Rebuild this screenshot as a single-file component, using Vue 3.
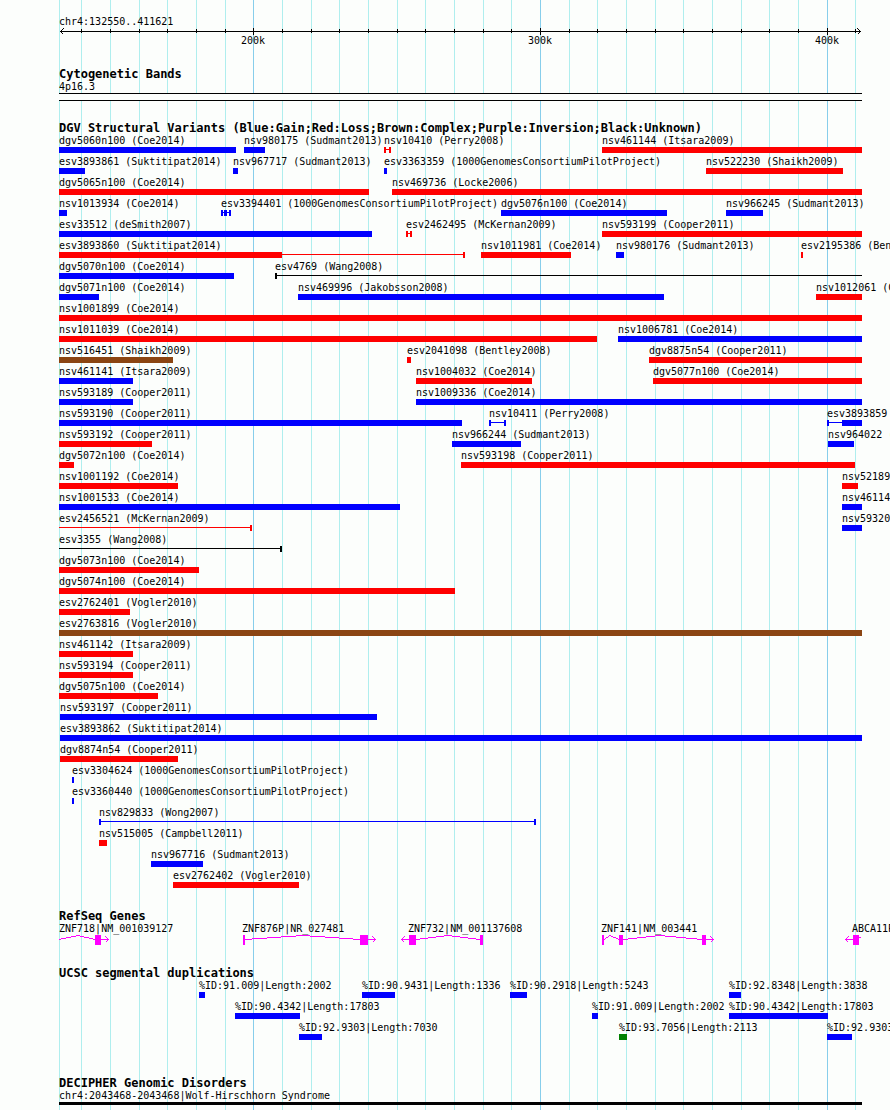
<template>
  <main class="browser">
    <div class="grid-lines" aria-hidden="true">
      <svg :viewBox="`0 0 ${span} 10`" preserveAspectRatio="none">
        <rect
          v-for="x in gridLines"
          :key="x"
          :class="majors[x] ? 'major' : 'minor'"
          :x="x - view.start"
          y="0"
          width="1"
          height="10"
        />
      </svg>
    </div>

    <section class="ruler">
      <div class="label">chr4:132550..411621</div>
      <svg class="ruler-axis" :viewBox="`0 0 ${span} 7`" preserveAspectRatio="none">
        <rect x="1" y="3" :width="span - 2" height="1" />
        <rect
          v-for="x in gridLines.slice(1)"
          :key="x"
          :x="x - view.start"
          :y="majors[x] ? 0 : 1"
          width="1"
          :height="majors[x] ? 7 : 4"
        />
        <path d="M4.5 0.5L1.5 3.5L4.5 6.5" />
        <path :d="`M${span - 4.5} 0.5L${span - 1.5} 3.5L${span - 4.5} 6.5`" />
      </svg>
      <div class="row">
        <span
          v-for="(text, x) in majors"
          :key="x"
          class="label tick-label"
          :style="place(Number(x), Number(x))"
        >{{ text }}</span>
      </div>
    </section>

    <section class="bands">
      <h2>Cytogenetic Bands</h2>
      <div class="label">4p16.3</div>
      <div class="band"></div>
    </section>

    <section v-for="track in tracks" :key="track.title" class="track" :class="track.kind">
      <h2>{{ track.title }}</h2>
      <div class="rows">
        <div v-for="(row, i) in track.rows" :key="i" class="row">
          <div
            v-for="(f, j) in row"
            :key="j"
            class="feature"
            :style="place(f[2], f[3])"
          >
            <div class="label">{{ f[0] }}</div>
            <svg
              :class="f[1]"
              :viewBox="`0 0 ${f[3] - f[2]} 6`"
              preserveAspectRatio="none"
            >
              <template v-if="f[4]">
                <rect x="0" y="2" :width="f[3] - f[2]" height="1" />
                <rect
                  v-for="block in f[4]"
                  :key="block[0]"
                  :x="block[0] - f[2]"
                  y="0"
                  :width="block[1] - block[0]"
                  height="6"
                />
              </template>
              <rect v-else x="0" y="0" :width="f[3] - f[2]" height="6" />
            </svg>
          </div>
        </div>
      </div>
      <svg
        v-if="track.kind === 'genes'"
        class="gene-models"
        :viewBox="`${view.start} 0 ${span} 10`"
        preserveAspectRatio="none"
      >
        <rect
          v-for="exon in exons"
          :key="exon[0]"
          :x="exon[0]"
          y="0"
          :width="exon[1] - exon[0]"
          height="10"
        />
        <path v-for="d in introns" :key="d" :d="d" />
      </svg>
    </section>

    <section class="decipher">
      <h2>DECIPHER Genomic Disorders</h2>
      <div class="label">chr4:2043468-2043468|Wolf-Hirschhorn Syndrome</div>
      <div class="disorder"></div>
    </section>
  </main>
</template>

<script setup>
// visible range of the panel, in drawing units
const view = { start: 59, end: 862 }
const span = view.end - view.start

const gridLines = [
  59, 81, 110, 139, 167, 196, 225, 253, 282, 311, 339, 368, 397, 425, 454,
  483, 511, 540, 569, 597, 626, 655, 683, 712, 741, 769, 798, 827, 855
]
const majors = { 253: '200k', 540: '300k', 827: '400k' }

// feature: [label, colour, start, end, blocks joined by a thin line]
const variants = [
  [
    ['dgv5060n100 (Coe2014)', 'blue', 59, 236],
    ['nsv980175 (Sudmant2013)', 'blue', 244, 265],
    ['nsv10410 (Perry2008)', 'red', 384, 391, [[384, 386], [389, 391]]],
    ['nsv461144 (Itsara2009)', 'red', 602, 862]
  ],
  [
    ['esv3893861 (Suktitipat2014)', 'blue', 59, 85],
    ['nsv967717 (Sudmant2013)', 'blue', 233, 238],
    ['esv3363359 (1000GenomesConsortiumPilotProject)', 'blue', 384, 387],
    ['nsv522230 (Shaikh2009)', 'red', 706, 843]
  ],
  [
    ['dgv5065n100 (Coe2014)', 'red', 59, 369],
    ['nsv469736 (Locke2006)', 'red', 392, 862]
  ],
  [
    ['nsv1013934 (Coe2014)', 'blue', 59, 67],
    ['esv3394401 (1000GenomesConsortiumPilotProject)', 'blue', 221, 231, [[221, 223], [224, 227], [229, 231]]],
    ['dgv5076n100 (Coe2014)', 'blue', 501, 667],
    ['nsv966245 (Sudmant2013)', 'blue', 726, 763]
  ],
  [
    ['esv33512 (deSmith2007)', 'blue', 59, 372],
    ['esv2462495 (McKernan2009)', 'red', 406, 412, [[406, 408], [410, 412]]],
    ['nsv593199 (Cooper2011)', 'red', 602, 862]
  ],
  [
    ['esv3893860 (Suktitipat2014)', 'red', 59, 465, [[59, 282], [463, 465]]],
    ['nsv1011981 (Coe2014)', 'red', 481, 571],
    ['nsv980176 (Sudmant2013)', 'blue', 616, 624],
    ['esv2195386 (Bentley2008)', 'red', 801, 803]
  ],
  [
    ['dgv5070n100 (Coe2014)', 'blue', 59, 234],
    ['esv4769 (Wang2008)', 'black', 275, 862, [[275, 277]]]
  ],
  [
    ['dgv5071n100 (Coe2014)', 'blue', 59, 99],
    ['nsv469996 (Jakobsson2008)', 'blue', 298, 664],
    ['nsv1012061 (Coe2014)', 'red', 816, 862]
  ],
  [['nsv1001899 (Coe2014)', 'red', 59, 862]],
  [
    ['nsv1011039 (Coe2014)', 'red', 59, 597],
    ['nsv1006781 (Coe2014)', 'blue', 618, 862]
  ],
  [
    ['nsv516451 (Shaikh2009)', 'brown', 59, 173],
    ['esv2041098 (Bentley2008)', 'red', 407, 411],
    ['dgv8875n54 (Cooper2011)', 'red', 649, 862]
  ],
  [
    ['nsv461141 (Itsara2009)', 'blue', 59, 133],
    ['nsv1004032 (Coe2014)', 'red', 416, 532],
    ['dgv5077n100 (Coe2014)', 'red', 653, 862]
  ],
  [
    ['nsv593189 (Cooper2011)', 'blue', 59, 133],
    ['nsv1009336 (Coe2014)', 'blue', 416, 862]
  ],
  [
    ['nsv593190 (Cooper2011)', 'blue', 59, 462],
    ['nsv10411 (Perry2008)', 'blue', 489, 506, [[489, 491], [504, 506]]],
    ['esv3893859 (Suktitipat2014)', 'blue', 827, 862, [[827, 829], [842, 862]]]
  ],
  [
    ['nsv593192 (Cooper2011)', 'red', 59, 152],
    ['nsv966244 (Sudmant2013)', 'blue', 452, 521],
    ['nsv964022 (Sudmant2013)', 'blue', 828, 854]
  ],
  [
    ['dgv5072n100 (Coe2014)', 'red', 59, 74],
    ['nsv593198 (Cooper2011)', 'red', 461, 855]
  ],
  [
    ['nsv1001192 (Coe2014)', 'red', 59, 178],
    ['nsv52189', 'red', 842, 858]
  ],
  [
    ['nsv1001533 (Coe2014)', 'blue', 59, 400],
    ['nsv46114', 'blue', 842, 862]
  ],
  [
    ['esv2456521 (McKernan2009)', 'red', 59, 252, [[250, 252]]],
    ['nsv59320', 'blue', 842, 862]
  ],
  [['esv3355 (Wang2008)', 'black', 59, 282, [[280, 282]]]],
  [['dgv5073n100 (Coe2014)', 'red', 59, 199]],
  [['dgv5074n100 (Coe2014)', 'red', 59, 455]],
  [['esv2762401 (Vogler2010)', 'red', 59, 130]],
  [['esv2763816 (Vogler2010)', 'brown', 59, 862]],
  [['nsv461142 (Itsara2009)', 'red', 59, 133]],
  [['nsv593194 (Cooper2011)', 'red', 59, 133]],
  [['dgv5075n100 (Coe2014)', 'red', 59, 158]],
  [['nsv593197 (Cooper2011)', 'blue', 60, 377]],
  [['esv3893862 (Suktitipat2014)', 'blue', 60, 862]],
  [['dgv8874n54 (Cooper2011)', 'red', 60, 178]],
  [['esv3304624 (1000GenomesConsortiumPilotProject)', 'blue', 72, 74]],
  [['esv3360440 (1000GenomesConsortiumPilotProject)', 'blue', 72, 74]],
  [['nsv829833 (Wong2007)', 'blue', 99, 536, [[99, 101], [534, 536]]]],
  [['nsv515005 (Campbell2011)', 'red', 99, 107]],
  [['nsv967716 (Sudmant2013)', 'blue', 151, 203]],
  [['esv2762402 (Vogler2010)', 'red', 173, 299]]
]

const genes = [
  [
    ['ZNF718|NM_001039127', 'magenta', 59, 109],
    ['ZNF876P|NR_027481', 'magenta', 242, 376],
    ['ZNF732|NM_001137608', 'magenta', 408, 483],
    ['ZNF141|NM_003441', 'magenta', 601, 714],
    ['ABCA11P', 'magenta', 852, 862]
  ]
]

const exons = [
  [95, 101], [243, 245], [360, 368], [409, 416], [480, 483],
  [602, 604], [619, 623], [702, 706], [853, 859]
]
const introns = [
  'M59 4.5L78 0.5L95 4.5M101 4.5H109M105.5 1.5L108.5 4.5L105.5 7.5',
  'M245 4.5L303 0.5L360 4.5M368 4.5H376M372.5 1.5L375.5 4.5L372.5 7.5',
  'M409 4.5H401M404.5 1.5L401.5 4.5L404.5 7.5M416 4.5L448 0.5L480 4.5',
  'M604 4.5L610 0.5L619 4.5M623 4.5L660 0.5L702 4.5M706 4.5H714M710.5 1.5L713.5 4.5L710.5 7.5',
  'M853 4.5H845M848.5 1.5L845.5 4.5L848.5 7.5M859 2.5H861'
]

const duplications = [
  [
    ['%ID:91.009|Length:2002', 'blue', 199, 205],
    ['%ID:90.9431|Length:1336', 'blue', 362, 395],
    ['%ID:90.2918|Length:5243', 'blue', 510, 527],
    ['%ID:92.8348|Length:3838', 'blue', 729, 741]
  ],
  [
    ['%ID:90.4342|Length:17803', 'blue', 235, 300],
    ['%ID:91.009|Length:2002', 'blue', 592, 598],
    ['%ID:90.4342|Length:17803', 'blue', 729, 828]
  ],
  [
    ['%ID:92.9303|Length:7030', 'blue', 299, 322],
    ['%ID:93.7056|Length:2113', 'green', 619, 627],
    ['%ID:92.9303|Length:7030', 'blue', 827, 852]
  ]
]

const tracks = [
  {
    title: 'DGV Structural Variants (Blue:Gain;Red:Loss;Brown:Complex;Purple:Inversion;Black:Unknown)',
    kind: 'variants',
    rows: variants
  },
  { title: 'RefSeq Genes', kind: 'genes', rows: genes },
  { title: 'UCSC segmental duplications', kind: 'duplications', rows: duplications }
]

function place(start, end) {
  return {
    marginLeft: ((start - view.start) / span) * 100 + '%',
    width: ((end - start) / span) * 100 + '%'
  }
}
</script>

<style>
body {
  margin: 0;
  background: #fcfefc;
}
</style>

<style scoped>
.browser {
  position: relative;
  box-sizing: border-box;
  min-height: 100vh;
  padding: 16px 28px 5px 59px;
  overflow: hidden;
  background: #fcfefc;
  color: #000;
  font-family: "DejaVu Sans Mono", "Liberation Mono", monospace;
  font-size: 10px;
  line-height: 12px;
}
.grid-lines {
  position: absolute;
  inset: 0 28px 0 59px;
}
svg {
  display: block;
  width: 100%;
  shape-rendering: crispEdges;
}
.grid-lines svg {
  height: 100%;
}
.minor {
  fill: #afeeee;
}
.major {
  fill: #87ceeb;
}
section {
  position: relative;
}
h2 {
  margin: 0;
  font-size: 12px;
  line-height: 13px;
  font-weight: bold;
  white-space: nowrap;
}
.label {
  height: 12px;
  white-space: nowrap;
}

.ruler,
.bands {
  margin-bottom: 21px;
}
.ruler-axis {
  height: 7px;
}
.ruler-axis path {
  fill: none;
  stroke: #000;
}
.tick-label {
  grid-area: 1 / 1;
  display: flex;
  justify-content: center;
}
.band {
  height: 6px;
  border: solid #000;
  border-width: 1px 0;
  background: #fcfefc;
}

.track {
  margin-bottom: 22px;
}
.track.duplications {
  margin-bottom: 37px;
}
.rows {
  display: grid;
  gap: 3px;
}
.row {
  display: grid;
  grid-template-columns: minmax(0, 1fr);
}
.feature {
  grid-area: 1 / 1;
}
.feature svg {
  height: 6px;
}
.genes .feature svg {
  display: none;
}
.gene-models {
  height: 10px;
  overflow: visible;
  fill: #f0f;
}
.gene-models path {
  fill: none;
  stroke: #f0f;
}
.blue {
  fill: #00f;
}
.red {
  fill: #f00;
}
.brown {
  fill: #8b4513;
}
.green {
  fill: #008000;
}
.black {
  fill: #000;
}
.disorder {
  height: 3px;
  background: #000;
}
</style>
